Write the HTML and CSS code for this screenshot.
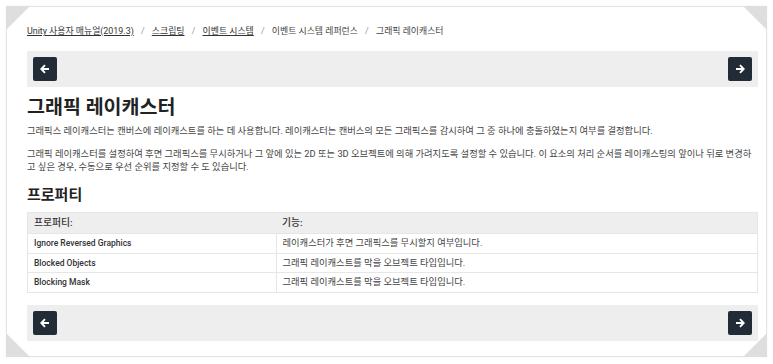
FILE: index.html
```html
<!DOCTYPE html>
<html lang="ko">

<head>
    <meta charset="UTF-8">
    <meta name="viewport" content="width=device-width, initial-scale=1.0">
    <title>그래픽 레이캐스터 - Unity 매뉴얼</title>
    <link rel="stylesheet" href="styles.css">
</head>

<body>

    <div class="page">
        <span class="corner tl"></span>
        <span class="corner tr"></span>
        <span class="corner bl"></span>
        <span class="corner br"></span>

        <div class="breadcrumbs">
            <a href="#">Unity 사용자 매뉴얼(2019.3)</a>
            <span class="sep">/</span>
            <a href="#">스크립팅</a>
            <span class="sep">/</span>
            <a href="#">이벤트 시스템</a>
            <span class="sep">/</span>
            <span>이벤트 시스템 레퍼런스</span>
            <span class="sep">/</span>
            <span>그래픽 레이캐스터</span>
        </div>

        <div class="nav-bar">
            <a class="nav-btn" href="#" title="이전">
                <svg viewBox="0 0 10 10" width="10" height="10"><path d="M5 1.2 1.3 5 5 8.8M1.6 5H9" fill="none" stroke="#fff" stroke-width="1.9"/></svg>
            </a>
            <a class="nav-btn" href="#" title="다음">
                <svg viewBox="0 0 10 10" width="10" height="10"><path d="M5 1.2 8.7 5 5 8.8M8.4 5H1" fill="none" stroke="#fff" stroke-width="1.9"/></svg>
            </a>
        </div>

        <h1>그래픽 레이캐스터</h1>
        <p class="first">그래픽스 레이캐스터는 캔버스에 레이캐스트를 하는 데 사용합니다. 레이캐스터는 캔버스의 모든 그래픽스를 감시하여 그 중 하나에 충돌하였는지 여부를 결정합니다.</p>
        <p>그래픽 레이캐스터를 설정하여 후면 그래픽스를 무시하거나 그 앞에 있는 2D 또는 3D 오브젝트에 의해 가려지도록 설정할 수 있습니다. 이 요소의 처리 순서를 레이캐스팅의 앞이나 뒤로 변경하고 싶은 경우, 수동으로 우선 순위를 지정할 수 도 있습니다.</p>

        <h2>프로퍼티</h2>
        <table>
            <tr>
                <th class="col-prop">프로퍼티:</th>
                <th>기능:</th>
            </tr>
            <tr>
                <td class="prop">Ignore Reversed Graphics</td>
                <td>레이캐스터가 후면 그래픽스를 무시할지 여부입니다.</td>
            </tr>
            <tr>
                <td class="prop">Blocked Objects</td>
                <td>그래픽 레이캐스트를 막을 오브젝트 타입입니다.</td>
            </tr>
            <tr>
                <td class="prop">Blocking Mask</td>
                <td>그래픽 레이캐스트를 막을 오브젝트 타입입니다.</td>
            </tr>
        </table>

        <div class="nav-bar bottom">
            <a class="nav-btn" href="#" title="이전">
                <svg viewBox="0 0 10 10" width="10" height="10"><path d="M5 1.2 1.3 5 5 8.8M1.6 5H9" fill="none" stroke="#fff" stroke-width="1.9"/></svg>
            </a>
            <a class="nav-btn" href="#" title="다음">
                <svg viewBox="0 0 10 10" width="10" height="10"><path d="M5 1.2 8.7 5 5 8.8M8.4 5H1" fill="none" stroke="#fff" stroke-width="1.9"/></svg>
            </a>
        </div>
    </div>

</body>

</html>
```

FILE: styles.css
```css
body {
    font-family: Roboto, "Noto Sans CJK KR", sans-serif;
    margin: 0;
    padding: 0;
    background-color: #fff;
    color: #444;
}

.page {
    position: relative;
    margin: 6px;
    height: 351px;
    box-sizing: border-box;
    padding: 17px 8px 0 20px;
    border: 1px solid #e3e3e3;
    box-shadow: 0 0 2px rgba(0, 0, 0, 0.06);
    background-color: #fff;
}

/* folded corners */
.corner {
    position: absolute;
    width: 24px;
    height: 24px;
    background-color: #dedede;
}

.tl {
    top: -1px;
    left: -1px;
    clip-path: polygon(0 0, 100% 0, 0 100%);
}

.tr {
    top: -1px;
    right: -1px;
    clip-path: polygon(0 0, 100% 0, 100% 100%);
}

.bl {
    bottom: -1px;
    left: -1px;
    clip-path: polygon(0 0, 0 100%, 100% 100%);
}

.br {
    bottom: -1px;
    right: -1px;
    clip-path: polygon(100% 0, 100% 100%, 0 100%);
}

.breadcrumbs {
    font-size: 8.9px;
    line-height: 14px;
    color: #444;
}

.breadcrumbs a {
    color: #333;
    text-decoration: underline;
}

.breadcrumbs .sep {
    color: #999;
    margin: 0 5px;
}

.nav-bar {
    display: flex;
    justify-content: space-between;
    margin-top: 13px;
    padding: 6px;
    background-color: #eee;
}

.nav-bar.bottom {
    margin-top: 12px;
}

.nav-btn {
    display: flex;
    align-items: center;
    justify-content: center;
    width: 24px;
    height: 24px;
    border-radius: 2px;
    background-color: #222c37;
}

h1 {
    font-size: 19.5px;
    line-height: 24px;
    font-weight: bold;
    color: #222;
    margin: 9px 0 0;
}

p {
    font-size: 9.3px;
    line-height: 13px;
    margin: 10px 0 0;
}

p.first {
    margin-top: 4px;
}

h2 {
    font-size: 15px;
    line-height: 20px;
    font-weight: bold;
    color: #222;
    margin: 12px 0 0;
}

table {
    width: 100%;
    margin-top: 7px;
    border-collapse: collapse;
    border: 1px solid #e6e6e6;
}

th {
    height: 20px;
    padding: 0 6px;
    text-align: left;
    font-size: 9.8px;
    line-height: 12px;
    font-weight: 500;
    color: #333;
    background-color: #eee;
}

th.col-prop {
    width: 236px;
}

td {
    height: 18.6px;
    padding: 0 6px;
    font-size: 9.3px;
    line-height: 12px;
    border-top: 1px solid #e6e6e6;
    border-left: 1px solid #e6e6e6;
}

td.prop {
    font-size: 8.5px;
    font-weight: 500;
    color: #333;
    border-left: none;
}
```
